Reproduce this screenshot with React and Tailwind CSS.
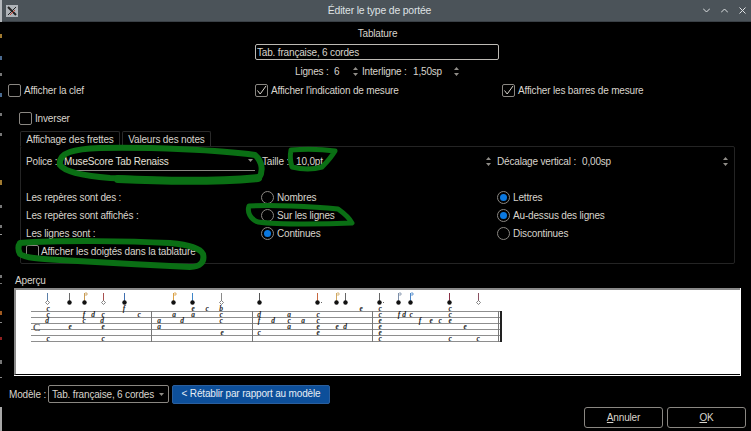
import React from 'react';

const FONT = { fontFamily: '"Liberation Sans", Arial, sans-serif' };

// tab letters per staff row (row 0 sits above the top line)
const LETTERS = [
  [48, 0, 'c'], [48, 1, 'c'], [47, 2, 'd'], [48, 5, 'c'], [70, 3, 'e'], [84, 1, 'f'], [84, 2, 'c'], [93, 1, 'd'],
  [103, 1, 'c'], [102, 2, 'd'], [103, 3, 'e'], [103, 5, 'c'], [124, 0, 'f'], [139, 1, 'c'],
  [159, 2, 'a'], [159, 3, 'a'], [174, 1, 'a'], [182, 2, 'd'], [193, 0, 'e'], [193, 1, 'a'], [207, 0, 'c'],
  [221, 0, 'b'], [221, 1, 'c'], [221, 2, 'c'], [222, 4, 'e'],
  [259, 1, 'd'], [259, 2, 'f'], [259, 4, 'c'], [273, 2, 'd'], [289, 1, 'a'], [289, 2, 'c'], [289, 3, 'a'], [303, 2, 'a'],
  [318, 1, 'c'], [318, 2, 'c'], [318, 3, 'e'], [318, 4, 'e'], [337, 3, 'e'], [345, 3, 'd'], [361, 0, 'e'],
  [380, 0, 'c'], [380, 1, 'c'], [380, 2, 'e'], [380, 3, 'e'], [380, 4, 'e'], [380, 5, 'c'], [399, 1, 'f'], [404, 1, 'd'],
  [411, 1, 'c'], [420, 2, 'f'], [431, 2, 'e'], [440, 2, 'c'], [450, 0, 'c'], [450, 1, 'c'], [450, 2, 'e'], [450, 5, 'c'],
  [465, 3, 'e'], [478, 5, 'c'],
];

// rhythm stems: x, stem colour, type
const STEMS = [
  [47, '#5b7fa8', 'hollow'], [69, '#6b6b6b', 'note'], [84, '#c79a52', 'flag'], [103, '#a8504f', 'hollow'], [124, '#3f6fb0', 'note'],
  [173, '#d9a043', 'flag'], [192, '#3f86c8', 'note'], [221, '#8a8a8a', 'hollow'], [259, '#555', 'note'], [317, '#c8683f', 'dot'],
  [336, '#d0a860', 'flag'], [345, '#666', 'note'], [379, '#666', 'dot'], [398, '#7d8fa8', 'flag'], [410, '#4a86c8', 'flag'],
  [449, '#8a3045', 'note'], [478, '#8a5060', 'hollow'],
];

// bits of the window behind the dialog, along the left edge
const EDGE_MARKS = [
  [34, '#a07a30', 4], [56, '#4a6a90', 4], [73, '#777', 3], [93, '#4a6a90', 4], [113, '#777', 3], [133, '#777', 3], [180, '#a07a30', 5],
  [205, '#777', 3], [225, '#777', 3], [234, '#999', 1], [275, '#777', 3], [283, '#777', 1], [311, '#a05a20', 4], [322, '#888', 1],
  [337, '#902020', 3], [360, '#777', 4], [377, '#888', 1],
];

function Check({ checked }) {
  return (
    <span className="flex h-[13px] w-[13px] shrink-0 items-center justify-center rounded-[2px] border border-[#8a8782] bg-black">
      {checked && (
        <svg width="11" height="11" viewBox="0 0 11 11" fill="none" stroke="#d8d4cc" strokeWidth="1">
          <path d="M1.5 5.5 L4.2 9 L10 1" />
        </svg>
      )}
    </span>
  );
}

function Radio({ on }) {
  return (
    <span className="flex h-[13px] w-[13px] shrink-0 items-center justify-center rounded-full border border-[#8a8782] bg-black">
      {on && <span className="h-[7px] w-[7px] rounded-full bg-[#0a78e0]" />}
    </span>
  );
}

function Spin() {
  return (
    <svg width="7" height="13" viewBox="0 0 7 13" fill="#8f8c87" className="shrink-0">
      <path d="M3.5 2 L6 5 H1 Z M3.5 11 L1 8 H6 Z" />
    </svg>
  );
}

function Label({ children, className = '' }) {
  return <span className={`whitespace-nowrap pt-[2px] ${className}`}>{children}</span>;
}

function Score() {
  const lines = [312, 318, 324, 330, 336, 342];
  const bars = [151, 252, 372, 498];
  return (
    <svg width="725" height="84" viewBox="16 290 725 84" className="block">
      {lines.map((y) => (
        <line key={y} x1="31" x2="502" y1={y - 0.5} y2={y - 0.5} stroke="#8e8e8e" strokeWidth="1" />
      ))}
      {bars.map((x) => (
        <line key={x} x1={x + 0.5} x2={x + 0.5} y1="311" y2="342" stroke="#777" strokeWidth="1" />
      ))}
      <rect x="500" y="311" width="2" height="31" fill="#222" />
      <text x="33" y="331" fontSize="11" fill="#444" fontFamily='"Liberation Serif", serif'>C</text>
      {STEMS.map(([x, color, type]) => (
        <g key={x}>
          <line x1={x + 0.5} x2={x + 0.5} y1="293" y2="302" stroke={color} strokeWidth="1" />
          {type === 'flag' && <path d={`M${x + 1} 293 h2 v2 h-2`} fill="none" stroke={color} strokeWidth="0.8" />}
          {type === 'hollow' ? (
            <path d={`M${x + 0.5} 300.5 l2 2 l-2 2 l-2 -2 Z`} fill="#fff" stroke="#666" strokeWidth="0.8" />
          ) : (
            <circle cx={x + 0.5} cy="302.5" r="2.2" fill="#111" />
          )}
          {type === 'dot' && <rect x={x + 4} y="302" width="1" height="1" fill="#666" />}
        </g>
      ))}
      {LETTERS.map(([x, row, ch], i) => (
        <text
          key={i}
          x={x}
          y={311 + row * 6}
          fontSize="7.5"
          fontStyle="italic"
          fontWeight="bold"
          textAnchor="middle"
          fill="#222"
          fontFamily='"Liberation Serif", serif'
        >
          {ch}
        </text>
      ))}
    </svg>
  );
}

function Scribbles() {
  return (
    <svg width="751" height="431" className="pointer-events-none absolute left-0 top-0" fill="none" stroke="#0a6f14" strokeLinecap="round" strokeLinejoin="round">
      <path strokeWidth="6" d="M60 165 C58 152 75 149 100 148 C150 147 220 150 255 155 C263 162 263 172 259 178 C220 182 150 180 110 178 C85 176 65 172 60 165 Z" />
      <path strokeWidth="8" d="M118 179 C160 181 215 182 258 178" />
      <path strokeWidth="5" d="M291 150 C305 149 320 149 335 151 C332 156 328 161 322 167 C312 170 300 169 292 167 C290 161 290 155 291 150 Z" />
      <path strokeWidth="5" d="M249 206 C270 205 310 206 338 209 C345 214 350 219 352 223 C330 224 280 225 258 222 C250 219 247 212 249 206 Z" />
      <path strokeWidth="6" d="M20 243 C60 240 130 241 170 243 C190 245 200 248 203 254 C205 262 200 267 190 267 C150 265 90 262 60 260 C40 259 25 258 20 254 C18 250 18 246 20 243 Z" />
    </svg>
  );
}

function EdgeMarks() {
  return (
    <svg width="3" height="431" className="pointer-events-none absolute left-0 top-0">
      <rect x="0" y="0" width="2" height="22" fill="#b4b8bc" />
      {EDGE_MARKS.map(([y, color, h]) => (
        <rect key={y} x="0" y={y} width="2" height={h} fill={color} />
      ))}
      <rect x="0" y="407" width="2" height="24" fill="#a8a8a8" />
    </svg>
  );
}

export default function App() {
  return (
    <div className="relative flex h-[431px] w-[751px] flex-col overflow-hidden bg-black text-[10px] leading-none tracking-[-0.17px] text-[#d8d4cc]" style={FONT}>
      {/* title bar */}
      <div className="flex h-[22px] shrink-0 items-center border-b border-[#3a4046] bg-[#4b5359] pl-[6px] pr-[5px] text-[#dfe2e4]">
        <svg width="12" height="12" viewBox="0 0 12 12" className="shrink-0">
          <rect width="12" height="12" fill="#aeb3b8" />
          <path d="M2 2 L10 10" stroke="#222" strokeWidth="2" />
          <path d="M10 2 L2 10" stroke="#222" strokeWidth="1" />
          <path d="M4 10 L9 5" stroke="#c04030" strokeWidth="1" />
        </svg>
        <div className="flex-1 pl-[38px] pt-[2px] text-center text-[10.4px]">Éditer le type de portée</div>
        <div className="flex items-center gap-[11px]">
          <svg width="7" height="5" viewBox="0 0 7 5" fill="none" stroke="#dfe2e4"><path d="M0 0.5 L3.5 4 L7 0.5" /></svg>
          <svg width="7" height="5" viewBox="0 0 7 5" fill="none" stroke="#dfe2e4"><path d="M0 4.5 L3.5 1 L7 4.5" /></svg>
          <svg width="7" height="7" viewBox="0 0 7 7" fill="none" stroke="#dfe2e4"><path d="M0.5 0.5 L6.5 6.5 M6.5 0.5 L0.5 6.5" /></svg>
        </div>
      </div>

      {/* name */}
      <div className="flex h-[22px] shrink-0 items-center justify-center pl-[4px] pt-[2px]">Tablature</div>
      <div className="flex h-[16px] shrink-0 justify-center pl-[3px]">
        <div className="flex h-[16px] w-[244px] items-center rounded-[2px] border border-[#bdbab4] pl-[1px] pt-[2px]">Tab. française, 6 cordes</div>
      </div>
      <div className="flex h-[22px] shrink-0 items-center pl-[295px]">
        <Label className="w-[39px]">Lignes :</Label>
        <Label className="w-[18px]">6</Label>
        <Spin />
        <Label className="ml-[3px] w-[51px]">Interligne :</Label>
        <Label className="w-[40px]">1,50sp</Label>
        <Spin />
      </div>
      <div className="flex h-[16px] shrink-0 items-center pl-[8px]">
        <div className="flex w-[247px] items-center gap-[3px]"><Check /><Label>Afficher la clef</Label></div>
        <div className="flex w-[247px] items-center gap-[3px]"><Check checked /><Label>Afficher l'indication de mesure</Label></div>
        <div className="flex items-center gap-[3px]"><Check checked /><Label>Afficher les barres de mesure</Label></div>
      </div>

      <div className="mt-[12px] flex h-[16px] shrink-0 items-center gap-[3px] pl-[19px]">
        <Check /><Label>Inverser</Label>
      </div>

      {/* tabs + panel */}
      <div className="ml-[20px] mt-[4px] flex h-[16px] shrink-0 items-end">
        <div className="relative top-px flex h-[16px] w-[100px] items-center justify-center rounded-t-[2px] border border-[#2a2a2a] border-b-black bg-black pt-[2px]">Affichage des frettes</div>
        <div className="ml-[2px] flex h-[15px] w-[89px] items-center justify-center rounded-t-[2px] border border-b-0 border-[#2a2a2a] pt-[2px]">Valeurs des notes</div>
      </div>
      <div className="ml-[20px] flex h-[118px] w-[715px] shrink-0 flex-col rounded-[2px] border border-[#242424] pl-[5px]">
        <div className="mt-[4px] flex h-[20px] items-center">
          <Label className="w-[37px]">Police :</Label>
          <div className="flex h-[20px] w-[192px] items-center justify-between border-b border-[#8a8782] pl-[1px] pr-[2px] text-[#e4e0d8]">
            <Label>MuseScore Tab Renaiss</Label>
            <svg width="5" height="3" viewBox="0 0 5 3" fill="#8f8c87"><path d="M0 0 H5 L2.5 3 Z" /></svg>
          </div>
          <Label className="ml-[7px] w-[34px]">Taille :</Label>
          <Label className="w-[189px]">10,0pt</Label>
          <Spin />
          <Label className="ml-[5px] w-[85px]">Décalage vertical :</Label>
          <Label className="w-[140px]">0,00sp</Label>
          <Spin />
        </div>
        <div className="mt-[17px] flex h-[18px] items-center">
          <Label className="w-[235px]">Les repères sont des :</Label>
          <div className="flex w-[236px] items-center gap-[3px]"><Radio /><Label>Nombres</Label></div>
          <div className="flex items-center gap-[3px]"><Radio on /><Label>Lettres</Label></div>
        </div>
        <div className="flex h-[18px] items-center">
          <Label className="w-[235px]">Les repères sont affichés :</Label>
          <div className="flex w-[236px] items-center gap-[3px]"><Radio /><Label>Sur les lignes</Label></div>
          <div className="flex items-center gap-[3px]"><Radio on /><Label>Au-dessus des lignes</Label></div>
        </div>
        <div className="flex h-[18px] items-center">
          <Label className="w-[235px]">Les lignes sont :</Label>
          <div className="flex w-[236px] items-center gap-[3px]"><Radio on /><Label>Continues</Label></div>
          <div className="flex items-center gap-[3px]"><Radio /><Label>Discontinues</Label></div>
        </div>
        <div className="flex h-[18px] items-center gap-[2px]">
          <Check /><Label>Afficher les doigtés dans la tablature</Label>
        </div>
      </div>

      {/* preview */}
      <div className="flex h-[24px] shrink-0 items-end pb-[2px] pl-[15px]">Aperçu</div>
      <div className="ml-[14px] flex h-[88px] w-[727px] shrink-0 flex-col border-b border-r border-white">
        <div className="h-[87px] border-b border-l-2 border-t-2 border-[#8a8a8a] border-b-black bg-white">
          <Score />
        </div>
      </div>

      {/* model row */}
      <div className="mt-[9px] flex h-[18px] shrink-0 items-center pl-[9px]">
        <Label className="w-[39px]">Modèle :</Label>
        <div className="flex h-[18px] w-[121px] items-center justify-between rounded-[2px] border border-[#8a8782] pl-[3px] pr-[4px]">
          <Label>Tab. française, 6 cordes</Label>
          <svg width="5" height="3" viewBox="0 0 5 3" fill="#8f8c87"><path d="M0 0 H5 L2.5 3 Z" /></svg>
        </div>
        <div className="ml-[3px] flex h-[19px] w-[158px] items-center justify-center rounded-[2px] border border-[#2a5f9e] bg-[#0d4f9a] text-[#e6edf5]">
          &lt; Rétablir par rapport au modèle
        </div>
      </div>

      {/* dialog buttons */}
      <div className="mt-[4px] flex h-[21px] shrink-0 justify-end gap-[4px] pr-[5px]">
        <div className="flex h-[21px] w-[79px] items-center justify-center rounded-[3px] border border-[#8a8782]">
          <span><span className="underline">A</span>nnuler</span>
        </div>
        <div className="flex h-[21px] w-[79px] items-center justify-center rounded-[3px] border border-[#8a8782]">
          <span><span className="underline">O</span>K</span>
        </div>
      </div>

      <EdgeMarks />
      <Scribbles />
    </div>
  );
}
